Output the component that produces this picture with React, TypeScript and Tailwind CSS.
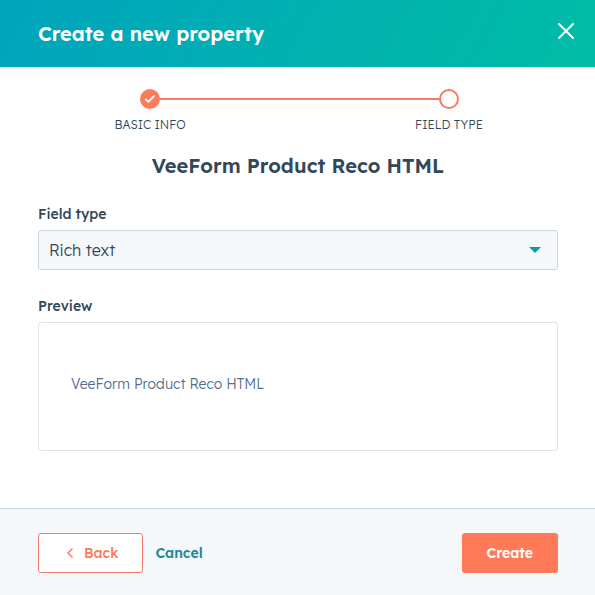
import { useState } from "react"

const FIELD_TYPES = ["Rich text", "Single-line text", "Multi-line text", "Number"]

function StepLabel({ children }: { children: string }) {
  return <span className="mt-2 whitespace-nowrap text-xs font-light leading-4">{children}</span>
}

function Stepper() {
  return (
    <ol className="flex items-start pl-18 pr-[69px]">
      <li className="flex w-20 flex-col items-center">
        <svg className="h-5 w-5" viewBox="0 0 20 20" fill="none" aria-hidden="true">
          <circle cx="10" cy="10" r="10" fill="#ff7a59" />
          <path d="M5.8 10.4l2.6 2.5 5.5-5.7" stroke="#fff" strokeWidth="1.9" strokeLinecap="round" strokeLinejoin="round" />
        </svg>
        <StepLabel>BASIC INFO</StepLabel>
      </li>
      <li className="-mx-[30px] mt-[9px] h-0.5 flex-1 bg-[#f27d62]" aria-hidden="true" />
      <li className="flex w-20 flex-col items-center" aria-current="step">
        <span className="h-5 w-5 rounded-full border-2 border-[#f27d62] bg-white" />
        <StepLabel>FIELD TYPE</StepLabel>
      </li>
    </ol>
  )
}

export default function App() {
  const [fieldType, setFieldType] = useState("Rich text")

  return (
    <div className="flex min-h-screen flex-col bg-white font-['Lexend_Deca',Inter,sans-serif] text-[#33475b]">
      <header className="flex h-[67px] items-center justify-between bg-linear-[120deg,#00a4bd,#00bda5] pl-[38px] pr-5">
        <h1 className="text-xl font-semibold text-white">Create a new property</h1>
        <button type="button" aria-label="Close" className="mb-1.5 cursor-pointer text-white">
          <svg className="h-[18px] w-[18px]" viewBox="0 0 18 18" fill="none" stroke="currentColor" strokeWidth="2" strokeLinecap="round">
            <path d="M2 2l14 14M16 2L2 16" />
          </svg>
        </button>
      </header>

      <main className="flex-1 pb-14 pl-[38px] pr-[37px] pt-[22px]">
        <Stepper />

        <h2 className="mt-[19px] text-center text-xl font-semibold leading-7">VeeForm Product Reco HTML</h2>

        <label htmlFor="field-type" className="mt-6 block text-sm font-medium leading-5">
          Field type
        </label>
        <div className="relative mt-1.5">
          <select
            id="field-type"
            value={fieldType}
            onChange={(e) => setFieldType(e.target.value)}
            className="block h-10 w-full cursor-pointer appearance-none rounded-[3px] border border-[#cbd6e2] bg-[#f5f8fa] px-2.5 text-base font-light"
          >
            {FIELD_TYPES.map((type) => (
              <option key={type}>{type}</option>
            ))}
          </select>
          <svg className="pointer-events-none absolute right-[17px] top-[17px] h-1.5 w-3" viewBox="0 0 12 6" fill="#0a9aaf" aria-hidden="true">
            <path d="M0 0h12L6 6z" />
          </svg>
        </div>

        <h3 className="mt-[26px] text-sm font-medium leading-5">Preview</h3>
        <div className="mt-1.5 rounded-[3px] border border-[#dfe3eb] px-8 pb-14 pt-[51px]">
          <p className="text-sm font-light leading-5 text-[#516f90]">VeeForm Product Reco HTML</p>
        </div>
      </main>

      <footer className="flex items-center border-t border-[#cbd6e2] bg-[#f5f8fa] pb-[22px] pl-[38px] pr-[37px] pt-6 text-sm">
        <button
          type="button"
          className="flex h-10 cursor-pointer items-center gap-[11px] rounded-[3px] border border-[#f27d6c] bg-white px-6 font-medium text-[#ff7a59]"
        >
          <svg className="ml-1 h-2.5 w-1.5" viewBox="0 0 6 10" fill="none" stroke="currentColor" strokeWidth="1.5" strokeLinecap="round" strokeLinejoin="round" aria-hidden="true">
            <path d="M5 1L1 5l4 4" />
          </svg>
          Back
        </button>
        <button type="button" className="ml-3 cursor-pointer font-semibold text-[#1f889d]">
          Cancel
        </button>
        <button type="button" className="ml-auto h-10 cursor-pointer rounded-[3px] bg-[#ff7a59] px-[25px] font-semibold text-white">
          Create
        </button>
      </footer>
    </div>
  )
}
